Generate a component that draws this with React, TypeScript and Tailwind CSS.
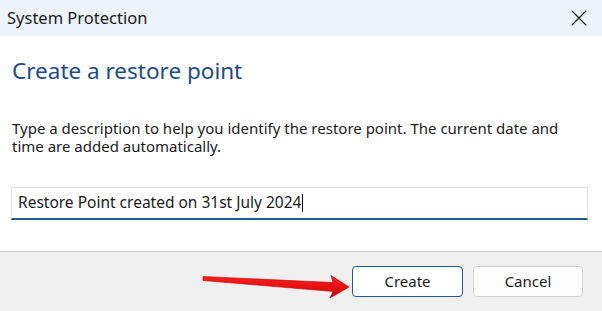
import { X } from "lucide-react";

function Arrow() {
  return (
    <svg
      className="pointer-events-none absolute left-[200px] top-[272px]"
      width="152"
      height="30"
      viewBox="0 0 152 30"
    >
      <defs>
        <linearGradient id="arrowRed" x1="0" y1="0" x2="0" y2="1">
          <stop offset="0" stopColor="#ff2020" />
          <stop offset="1" stopColor="#d00000" />
        </linearGradient>
      </defs>
      <path
        d="M3 4.5 L133 10.5 L131 3.5 L149 15 L130 26 L133 19.5 L3 8.5 Z"
        fill="url(#arrowRed)"
        stroke="#c00000"
        strokeWidth="0.6"
        strokeLinejoin="round"
      />
    </svg>
  );
}

export default function App() {
  return (
    <div
      className="relative flex h-[311px] w-[602px] flex-col overflow-hidden bg-white text-[#1b1b1b]"
      style={{ fontFamily: '"Noto Sans", "Open Sans", sans-serif' }}
    >
      <div className="flex h-[36px] items-center justify-between bg-[#edf3f8] pl-[7px] pr-[9px]">
        <span className="text-[16.5px] leading-none">System Protection</span>
        <X className="h-[28px] w-[28px] text-[#1b1b1b]" strokeWidth={1} />
      </div>

      <div className="flex flex-1 flex-col px-[12px]">
        <h1 className="mt-[20px] text-[22.5px] leading-[30px] text-[#1c4c8c]">Create a restore point</h1>
        <p className="mt-[33px] text-[15px] leading-[18px] text-[#1b1b1b]">
          Type a description to help you identify the restore point. The current date and
          <br />
          time are added automatically.
        </p>
        <div className="mt-[32px] flex h-[33px] w-[577px] items-center border border-b-2 border-[#e1e1e1] border-b-[#1f5c96] pl-[6px] -ml-[1px]">
          <span className="text-[15.5px] leading-none">Restore Point created on 31st July 2024</span>
          <span className="ml-[1px] h-[18px] w-[1px] bg-black" />
        </div>
      </div>

      <div className="flex h-[60px] items-center justify-end gap-[10px] border-t border-[#c9c9c9] bg-[#f0f0f0] pr-[19px]">
        <button className="h-[31px] w-[111px] rounded-[4px] border border-[#1f5a8e] bg-white text-[15px] text-[#1b1b1b]">
          Create
        </button>
        <button className="h-[31px] w-[110px] rounded-[4px] border border-[#d3d3d3] bg-[#fdfdfd] text-[15px] text-[#1b1b1b]">
          Cancel
        </button>
      </div>

      <Arrow />
    </div>
  );
}
